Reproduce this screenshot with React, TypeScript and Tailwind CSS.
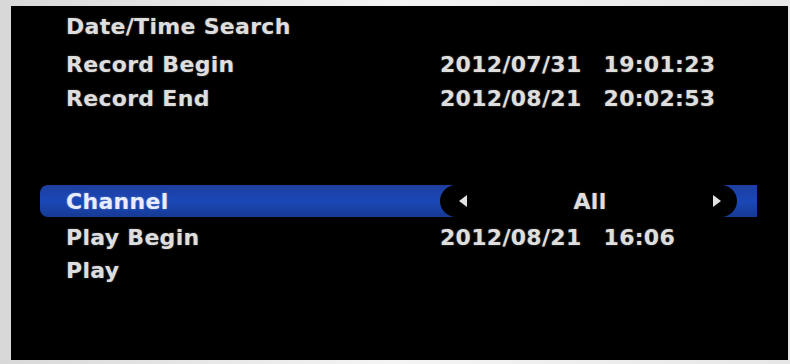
import React from "react";

const font = { fontFamily: '"DejaVu Sans", "Liberation Sans", sans-serif' };

function DateTime({ date, time }: { date: string; time: string }) {
  return (
    <span className="flex gap-[22px]">
      <span>{date}</span>
      <span>{time}</span>
    </span>
  );
}

function Row({ label, value, className = "" }: { label: string; value?: React.ReactNode; className?: string }) {
  return (
    <div className={`flex h-[34px] items-center ${className}`}>
      <span className="w-[400px] pl-[26px]">{label}</span>
      {value}
    </div>
  );
}

export default function App() {
  return (
    <div
      className="flex h-[364px] w-[790px] bg-gradient-to-r from-[#d8d8d8] via-[#f4f4f4] to-[#e6e6e6] pb-[4px] pl-[11px] pr-[2px] pt-[6px]"
      style={font}
    >
      <div className="flex flex-1 flex-col bg-black pl-[29px] pr-[31px] pt-[3px] text-[22px] font-bold tracking-[0.3px] text-[#dedede] [text-shadow:0_0_2px_rgba(255,255,255,0.35)]">
        <Row label="Date/Time Search" />
        <Row label="Record Begin" value={<DateTime date="2012/07/31" time="19:01:23" />} className="mt-[4px]" />
        <Row label="Record End" value={<DateTime date="2012/08/21" time="20:02:53" />} />

        {/* selected row */}
        <div className="mt-[70px] flex h-[32px] items-center rounded-l-[8px] bg-gradient-to-b from-[#1d3f9e] via-[#1b47b8] to-[#163a94]">
          <span className="w-[400px] pl-[26px] text-[#e8ecff]">Channel</span>
          <div className="flex h-full w-[297px] items-center justify-between rounded-full bg-black pl-[18px] pr-[15px]">
            <svg width="10" height="14" viewBox="0 0 10 14">
              <path d="M9 1 L1 7 L9 13 Z" fill="#e2e2e2" />
            </svg>
            <span>All</span>
            <svg width="10" height="14" viewBox="0 0 10 14">
              <path d="M1 1 L9 7 L1 13 Z" fill="#e2e2e2" />
            </svg>
          </div>
        </div>

        <Row label="Play Begin" value={<DateTime date="2012/08/21" time="16:06" />} className="mt-[3px]" />
        <Row label="Play" className="-mt-[1px]" />
      </div>
    </div>
  );
}
